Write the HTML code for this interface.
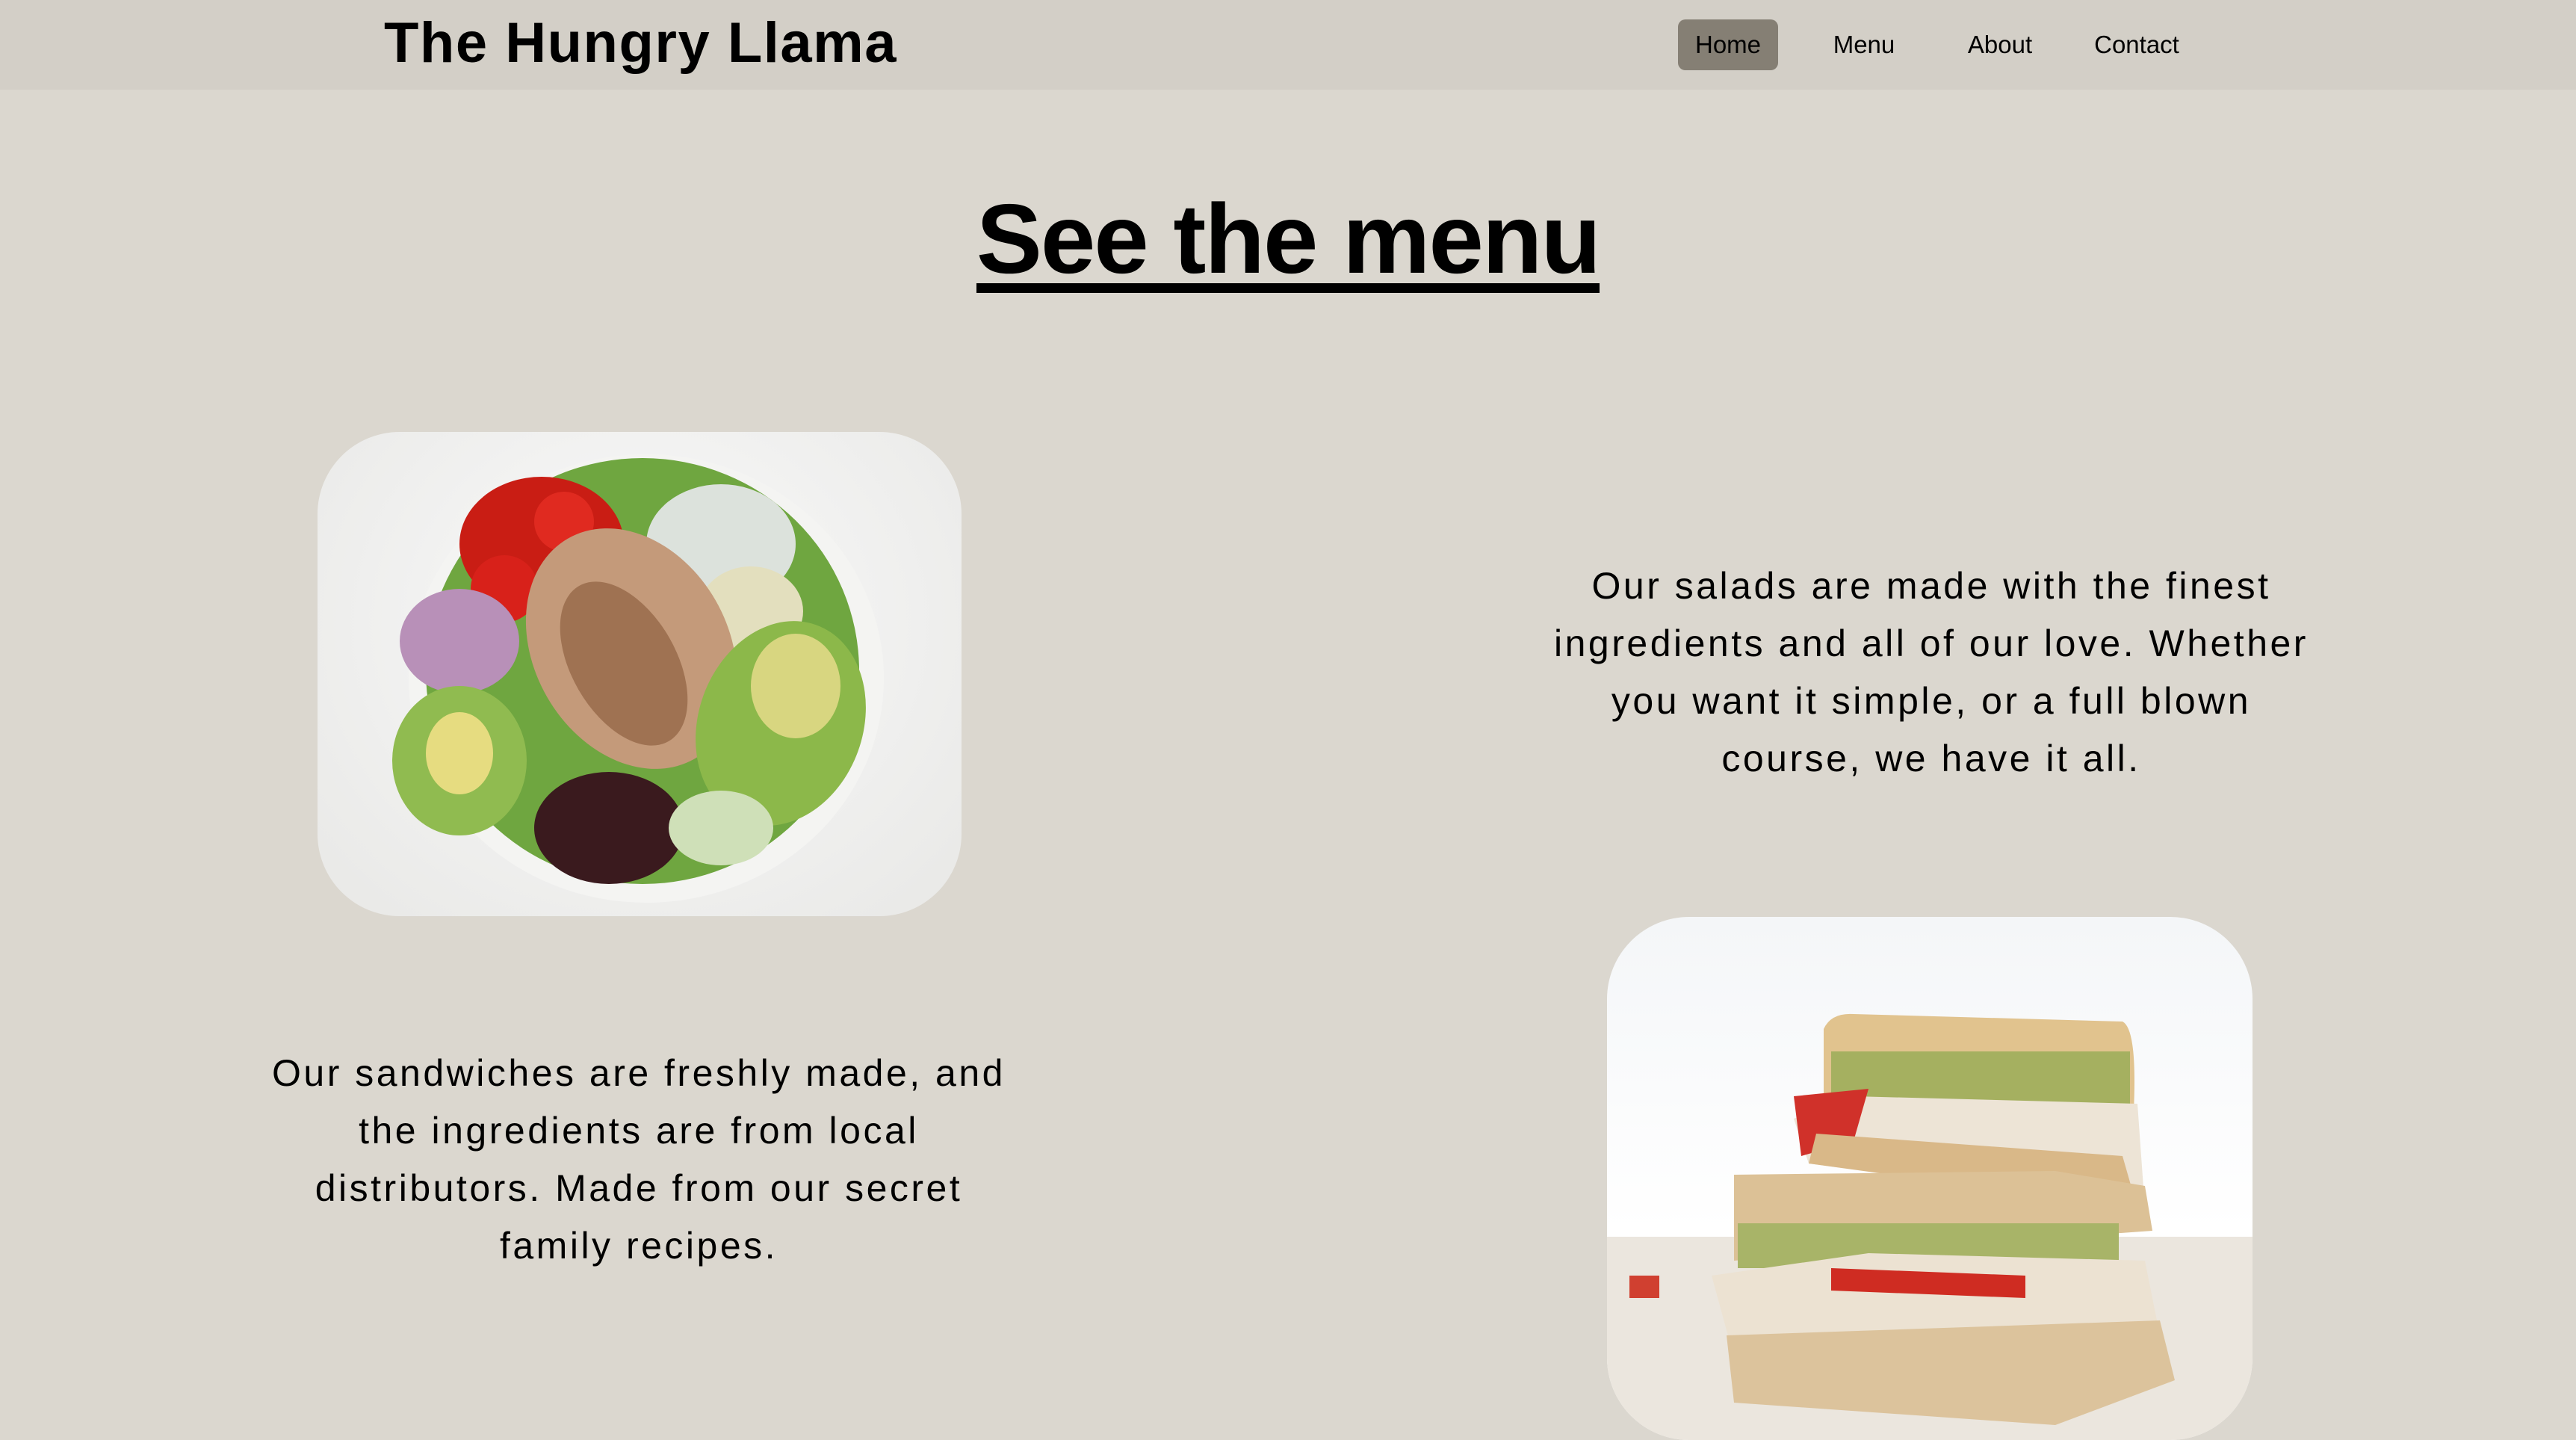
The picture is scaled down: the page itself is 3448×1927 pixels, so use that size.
<!DOCTYPE html>
<html><head><meta charset="utf-8"><style>
*{margin:0;padding:0;box-sizing:border-box}
html,body{width:3448px;height:1782px;overflow:hidden;background:#dbd7cf;font-family:"Liberation Sans",sans-serif;color:#000}
header{position:absolute;left:0;top:0;width:3448px;height:120px;background:#d3cfc7}
.logo{position:absolute;left:514px;top:8px;font-size:76px;font-weight:bold;letter-spacing:1.5px;line-height:100px}
.nav a{position:absolute;top:26px;height:68px;line-height:68px;font-size:33px;color:#000;text-decoration:none;text-align:center}
.home{left:2246px;width:134px;background:#857f74;border-radius:10px}
h1{position:absolute;left:0;width:3448px;top:250px;text-align:center;font-size:132px;font-weight:bold;letter-spacing:-2px;line-height:140px}
h1 span{border-bottom:13px solid #000;display:inline-block;line-height:118px;padding-bottom:0}
.img{position:absolute;border-radius:110px;overflow:hidden}
.p{position:absolute;text-align:center;font-size:50px;line-height:77px;letter-spacing:3.5px}
</style></head><body>
<header><div class="logo">The Hungry Llama</div>
<nav class="nav"><a class="home">Home</a><a style="left:2440px;width:110px">Menu</a><a style="left:2622px;width:110px">About</a><a style="left:2785px;width:150px">Contact</a></nav></header>
<h1><span>See the menu</span></h1>

<div class="img" style="left:425px;top:578px;width:862px;height:648px;background:radial-gradient(ellipse at 50% 40%,#fafafa,#e8e8e6)">
<svg width="862" height="648" viewBox="0 0 862 648">
<ellipse cx="440" cy="330" rx="318" ry="300" fill="#f4f4f2"/>
<ellipse cx="435" cy="320" rx="290" ry="285" fill="#6fa640"/>
<ellipse cx="300" cy="150" rx="110" ry="90" fill="#c91d14"/>
<circle cx="250" cy="210" r="45" fill="#d8211a"/><circle cx="330" cy="120" r="40" fill="#e02a20"/>
<ellipse cx="540" cy="150" rx="100" ry="80" fill="#dce2dc"/>
<ellipse cx="580" cy="240" rx="70" ry="60" fill="#e3dfbe"/>
<ellipse cx="190" cy="280" rx="80" ry="70" fill="#b890b8"/>
<ellipse cx="420" cy="290" rx="130" ry="170" fill="#c49a7a" transform="rotate(-30 420 290)"/>
<ellipse cx="410" cy="310" rx="70" ry="120" fill="#7a4a2a" opacity=".5" transform="rotate(-30 410 310)"/>
<ellipse cx="620" cy="390" rx="110" ry="140" fill="#8cb84a" transform="rotate(20 620 390)"/>
<ellipse cx="640" cy="340" rx="60" ry="70" fill="#d8d680"/>
<ellipse cx="190" cy="440" rx="90" ry="100" fill="#90bb50"/>
<ellipse cx="190" cy="430" rx="45" ry="55" fill="#e6dc80"/>
<ellipse cx="390" cy="530" rx="100" ry="75" fill="#3a1a1e"/>
<ellipse cx="540" cy="530" rx="70" ry="50" fill="#cfe0b8"/>
</svg></div>

<div class="p" style="left:1935px;width:1300px;top:746px">Our salads are made with the finest<br>ingredients and all of our love. Whether<br>you want it simple, or a full blown<br>course, we have it all.</div>

<div class="p" style="left:205px;width:1300px;top:1398px">Our sandwiches are freshly made, and<br>the ingredients are from local<br>distributors. Made from our secret<br>family recipes.</div>

<div class="img" style="left:2151px;top:1227px;width:864px;height:700px;background:linear-gradient(#f4f6f8,#fff 60%,#fff)">
<svg width="864" height="700" viewBox="0 0 864 700">
<rect x="0" y="428" width="864" height="272" fill="#ebe6de"/>
<path d="M290 150 Q300 128 330 130 L690 140 Q710 150 705 260 L290 260 Z" fill="#e1c38e"/>
<rect x="300" y="180" width="400" height="70" fill="#a5b060"/>
<path d="M250 270 L330 240 L710 250 L720 390 L270 330 Z" fill="#ede4d6"/>
<path d="M250 240 L350 230 L330 300 L260 320 Z" fill="#d0312a"/>
<path d="M270 330 L710 390 L690 320 L280 290 Z" fill="#d9b888"/>
<path d="M170 345 L600 340 L720 360 L730 420 L170 460 Z" fill="#dcc196"/>
<rect x="175" y="410" width="510" height="60" fill="#a8b468"/>
<path d="M140 480 L350 450 L720 460 L740 560 L170 590 Z" fill="#ece2d2"/>
<path d="M300 470 L560 480 L560 510 L300 500 Z" fill="#cf2c22"/>
<path d="M160 560 L740 540 L760 620 L600 680 L170 650 Z" fill="#dcc39c"/>
<rect x="30" y="480" width="40" height="30" fill="#d04030"/>
</svg></div>
</body></html>
